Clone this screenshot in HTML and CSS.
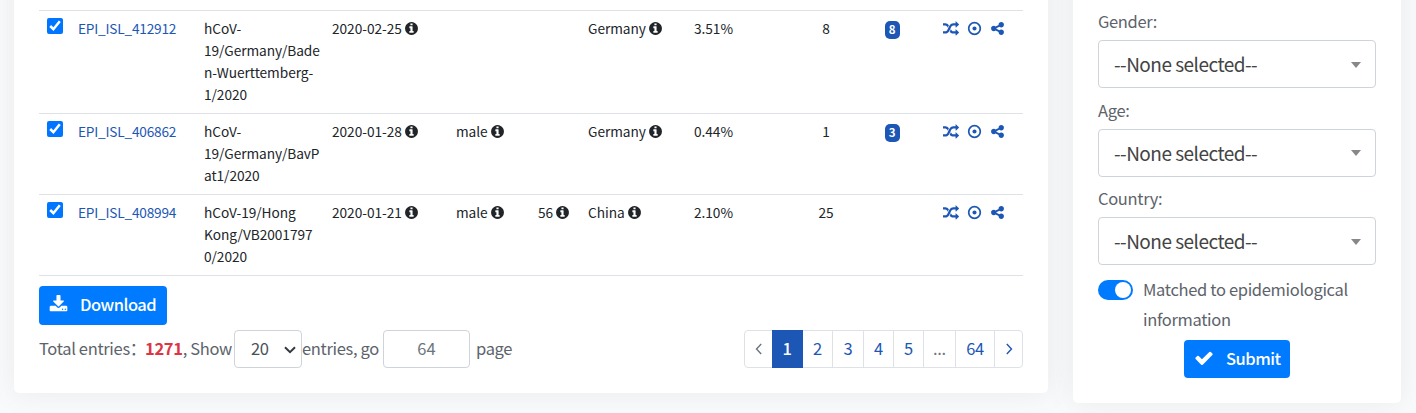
FILE: index.html
```
<!DOCTYPE html>
<html lang="en">
<head>
    <meta charset="UTF-8">
    <meta name="viewport" content="width=device-width, initial-scale=1.0">
    <title>Entries</title>
    <link rel="stylesheet" href="styles.css">
</head>
<body>
    <svg class="sprite" width="0" height="0">
        <symbol id="info" viewBox="0 0 1792 1792"><path d="M1152 1376v-160q0-14-9-23t-23-9h-96v-512q0-14-9-23t-23-9h-320q-14 0-23 9t-9 23v160q0 14 9 23t23 9h96v320h-96q-14 0-23 9t-9 23v160q0 14 9 23t23 9h448q14 0 23-9t9-23zm-128-896v-160q0-14-9-23t-23-9h-192q-14 0-23 9t-9 23v160q0 14 9 23t23 9h192q14 0 23-9t9-23zm640 416q0 209-103 385.5t-279.5 279.5-385.5 103-385.5-103-279.5-279.5-103-385.5 103-385.5 279.5-279.5 385.5-103 385.5 103 279.5 279.5 103 385.5z"/></symbol>
        <symbol id="random" viewBox="0 0 1792 1792"><path d="M666 481q-60 92-137 273-22-45-37-72.5t-40.5-63.5-51-56.5-63-35-81.5-14.5h-224q-14 0-23-9t-9-23v-192q0-14 9-23t23-9h224q250 0 410 225zm1126 799q0 14-9 23l-320 320q-9 9-23 9-13 0-22.5-9.5t-9.5-22.5v-192q-32 0-85 .5t-81 1-73-1-71-5-64-10.5-63-18.5-58-28.5-59-40-55-53.5-56-69.5q59-93 136-273 22 45 37 72.5t40.5 63.5 51 56.5 63 35 81.5 14.5h256v-192q0-14 9-23t23-9q12 0 24 10l319 319q9 9 9 23zm0-896q0 14-9 23l-320 320q-9 9-23 9-13 0-22.5-9.5t-9.5-22.5v-192h-256q-48 0-87 15t-69 45-51 61.5-45 77.5q-32 62-78 171-29 66-49.5 111t-54 105-64 100-74 83-90 68.5-106.5 42-128 16.5h-224q-14 0-23-9t-9-23v-192q0-14 9-23t23-9h224q48 0 87-15t69-45 51-61.5 45-77.5q32-62 78-171 29-66 49.5-111t54-105 64-100 74-83 90-68.5 106.5-42 128-16.5h256v-192q0-14 9-23t23-9q12 0 24 10l319 319q9 9 9 23z"/></symbol>
        <symbol id="dot" viewBox="0 0 14 14"><circle cx="7" cy="7" r="5.4" fill="none" stroke="currentColor" stroke-width="1.6"/><circle cx="7" cy="7" r="1.9"/></symbol>
        <symbol id="share" viewBox="0 0 1792 1792"><path d="M1344 1024q133 0 226.5 93.5t93.5 226.5-93.5 226.5-226.5 93.5-226.5-93.5-93.5-226.5q0-12 2-34l-360-180q-92 86-218 86-133 0-226.5-93.5t-93.5-226.5 93.5-226.5 226.5-93.5q126 0 218 86l360-180q-2-22-2-34 0-133 93.5-226.5t226.5-93.5 226.5 93.5 93.5 226.5-93.5 226.5-226.5 93.5q-126 0-218-86l-360 180q2 22 2 34t-2 34l360 180q92-86 218-86z"/></symbol>
        <symbol id="download" viewBox="0 0 1792 1792"><path d="M1344 1344q0-26-19-45t-45-19-45 19-19 45 19 45 45 19 45-19 19-45zm256 0q0-26-19-45t-45-19-45 19-19 45 19 45 45 19 45-19 19-45zm128-224v320q0 40-28 68t-68 28h-1472q-40 0-68-28t-28-68v-320q0-40 28-68t68-28h465l135 136q58 56 136 56t136-56l136-136h464q40 0 68 28t28 68zm-325-569q17 41-14 70l-448 448q-18 19-45 19t-45-19l-448-448q-31-29-14-70 17-39 59-39h256v-448q0-26 19-45t45-19h256q26 0 45 19t19 45v448h256q42 0 59 39z"/></symbol>
        <symbol id="check" viewBox="0 0 1792 1792"><path d="M1671 566q0 40-28 68l-724 724-136 136q-28 28-68 28t-68-28l-136-136-362-362q-28-28-28-68t28-68l136-136q28-28 68-28t68 28l294 295 656-657q28-28 68-28t68 28l136 136q28 28 28 68z"/></symbol>
    </svg>

    <div class="card entries">
        <table>
            <colgroup>
                <col class="w-check"><col class="w-id"><col class="w-strain"><col class="w-date"><col class="w-gender"><col class="w-age"><col class="w-country"><col class="w-percent"><col class="w-count"><col class="w-count"><col class="w-tools">
            </colgroup>
            <tr>
                <td><input type="checkbox" checked></td>
                <td><a href="#">EPI_ISL_412912</a></td>
                <td>hCoV-<br>19/Germany/Bade<br>n-Wuerttemberg-<br>1/2020</td>
                <td>2020-02-25 <svg class="info"><use href="#info"/></svg></td>
                <td></td>
                <td></td>
                <td>Germany <svg class="info"><use href="#info"/></svg></td>
                <td>3.51%</td>
                <td class="center">8</td>
                <td class="center"><span class="badge">8</span></td>
                <td><div class="tools"><svg class="random"><use href="#random"/></svg><svg><use href="#dot"/></svg><svg><use href="#share"/></svg></div></td>
            </tr>
            <tr>
                <td><input type="checkbox" checked></td>
                <td><a href="#">EPI_ISL_406862</a></td>
                <td>hCoV-<br>19/Germany/BavP<br>at1/2020</td>
                <td>2020-01-28 <svg class="info"><use href="#info"/></svg></td>
                <td>male <svg class="info"><use href="#info"/></svg></td>
                <td></td>
                <td>Germany <svg class="info"><use href="#info"/></svg></td>
                <td>0.44%</td>
                <td class="center">1</td>
                <td class="center"><span class="badge">3</span></td>
                <td><div class="tools"><svg class="random"><use href="#random"/></svg><svg><use href="#dot"/></svg><svg><use href="#share"/></svg></div></td>
            </tr>
            <tr>
                <td><input type="checkbox" checked></td>
                <td><a href="#">EPI_ISL_408994</a></td>
                <td>hCoV-19/Hong<br>Kong/VB2001797<br>0/2020</td>
                <td>2020-01-21 <svg class="info"><use href="#info"/></svg></td>
                <td>male <svg class="info"><use href="#info"/></svg></td>
                <td>56 <svg class="info"><use href="#info"/></svg></td>
                <td>China <svg class="info"><use href="#info"/></svg></td>
                <td>2.10%</td>
                <td class="center">25</td>
                <td></td>
                <td><div class="tools"><svg class="random"><use href="#random"/></svg><svg><use href="#dot"/></svg><svg><use href="#share"/></svg></div></td>
            </tr>
        </table>

        <button class="btn download"><svg><use href="#download"/></svg>Download</button>

        <div class="footer">
            <div class="totals">
                <span class="label-total">Total entries：</span>
                <span class="label-show"><b>1271</b>, Show</span>
                <div class="page-size">20<svg viewBox="0 0 12 8"><path d="M1 1.2l5 5 5-5"/></svg></div>
                <span class="label-go">entries, go</span>
                <input class="page-number" type="text" placeholder="64">
                <span>page</span>
            </div>
            <ul class="pager">
                <li class="muted"><svg viewBox="0 0 8 12"><path d="M6.2 1L1.5 6l4.7 5"/></svg></li>
                <li class="active">1</li>
                <li>2</li>
                <li>3</li>
                <li>4</li>
                <li>5</li>
                <li class="muted">...</li>
                <li>64</li>
                <li><svg viewBox="0 0 8 12"><path d="M1.8 1l4.7 5-4.7 5"/></svg></li>
            </ul>
        </div>
    </div>

    <div class="card filters">
        <label>Gender:</label>
        <div class="select">--None selected--</div>
        <label>Age:</label>
        <div class="select">--None selected--</div>
        <label>Country:</label>
        <div class="select">--None selected--</div>
        <div class="matched">
            <span class="switch"></span>
            <span>Matched to epidemiological information</span>
        </div>
        <button class="btn submit"><svg><use href="#check"/></svg>Submit</button>
    </div>
</body>
</html>
```
FILE: styles.css
```
* {
    box-sizing: border-box;
}
body {
    display: flex;
    align-items: flex-start;
    gap: 25px;
    height: 413px;
    margin: 0;
    padding: 0 15px 0 14px;
    overflow: hidden;
    background-color: #f9fafc;
    color: #5d636b;
    font-family: "Noto Sans CJK SC", "Noto Sans", sans-serif;
    font-size: 16.5px;
    letter-spacing: -0.33px;
}
svg {
    flex: none;
    fill: currentColor;
}
.sprite {
    position: absolute;
}
.card {
    margin-top: -60px;
    padding: 70px 25px 25px;
    background-color: #fff;
    border-radius: 5px;
    box-shadow: 0 0 28px rgba(100, 105, 112, 0.11);
}
.entries {
    width: 1034px;
    height: 453px;
}
.filters {
    width: 328px;
    height: 463px;
    padding-top: 69px;
}

/* entries table */
table {
    width: 984px;
    table-layout: fixed;
    border-collapse: separate;
    border-spacing: 0;
    border-bottom: 1px solid #dee2e6;
    color: #212529;
    font-size: 13.7px;
    line-height: 22px;
    letter-spacing: -0.05px;
}
td {
    padding: 6px 7px 8px;
    border-top: 1px solid #dee2e6;
    vertical-align: top;
    white-space: nowrap;
}
td:first-child {
    padding: 7px 8px;
}
.w-check { width: 32px; }
.w-id { width: 126px; }
.w-strain { width: 128px; }
.w-date { width: 124px; }
.w-gender { width: 82px; }
.w-age { width: 50px; }
.w-country { width: 106px; }
.w-percent { width: 106px; }
.w-count { width: 66px; }
.w-tools { width: 98px; }
td input {
    display: block;
    width: 16px;
    height: 16px;
    margin: 0;
}
td a {
    color: #1c57b5;
    letter-spacing: -0.22px;
    text-decoration: none;
}
.center {
    text-align: center;
}
.info {
    width: 15px;
    height: 15px;
    margin-left: -1px;
    vertical-align: -2px;
}
.badge {
    display: inline-block;
    width: 15px;
    height: 18px;
    margin-top: 4px;
    border-radius: 5px;
    background-color: #1c57b5;
    color: #fff;
    font-size: 11.5px;
    font-weight: bold;
    line-height: 17px;
    vertical-align: top;
}
.tools {
    display: flex;
    align-items: center;
    gap: 8px;
    height: 22px;
    padding: 1px 0 0 11px;
    color: #1c57b5;
}
.tools svg {
    width: 15px;
    height: 15px;
}
.tools .random {
    width: 16px;
    height: 16px;
}

/* buttons */
.btn {
    display: flex;
    align-items: center;
    height: 38px;
    padding: 0 0 2px 10px;
    border: 0;
    border-radius: 4px;
    background-color: #007bff;
    color: #fff;
    font-family: inherit;
    font-size: 16.5px;
    font-weight: 500;
    letter-spacing: -0.5px;
}
.btn svg {
    width: 19px;
    height: 19px;
    margin: 1px 12px 0 0;
}
.download {
    width: 128px;
    height: 39px;
    margin-top: 10px;
    padding-bottom: 3px;
}
.submit {
    width: 106px;
    margin: 6px auto 0;
}
.submit svg {
    width: 20px;
    height: 20px;
}

/* totals and pager */
.footer {
    display: flex;
    justify-content: space-between;
    margin-top: 5px;
}
.totals {
    display: flex;
    align-items: center;
    height: 38px;
    white-space: nowrap;
}
.totals span {
    padding-bottom: 2px;
}
.label-total {
    width: 106px;
}
.label-show {
    width: 89px;
}
.label-show b {
    color: #dc3545;
}
.page-size {
    display: flex;
    align-items: center;
    justify-content: space-between;
    width: 68px;
    height: 38px;
    padding: 0 5px 2px 16px;
    border: 1px solid #ced4da;
    border-radius: 4px;
    color: #495057;
}
.page-size svg {
    width: 12px;
    height: 8px;
    margin-top: 3px;
    fill: none;
    stroke: #343a40;
    stroke-width: 2;
}
.label-go {
    width: 81px;
}
.page-number {
    width: 87px;
    height: 38px;
    margin-right: 6px;
    padding: 0 0 2px;
    border: 1px solid #ced4da;
    border-radius: 4px;
    font-family: inherit;
    font-size: 16.5px;
    text-align: center;
}
.page-number::placeholder {
    color: #6c757d;
}
.pager {
    display: grid;
    grid-template-columns: 27px 31px 30px 31px 30px 30px 32px 39px 27px;
    width: 279px;
    height: 38px;
    margin: 0;
    padding: 0;
    border: 1px solid #dee2e6;
    border-radius: 4px;
    list-style: none;
    color: #1c57b5;
}
.pager li {
    display: flex;
    align-items: center;
    justify-content: center;
    padding-bottom: 2px;
    border-right: 1px solid #dee2e6;
}
.pager li:first-child,
.pager li:last-child {
    padding-bottom: 0;
    border-right: 0;
}
.pager .active {
    margin: -1px 0;
    border-color: #1c57b5;
    background-color: #1c57b5;
    color: #fff;
    font-weight: 500;
}
.pager .muted {
    color: #6c757d;
}
.pager svg {
    width: 8px;
    height: 12px;
    fill: none;
    stroke: currentColor;
    stroke-width: 1.4;
}

/* filters */
.filters label {
    display: block;
    height: 24px;
    line-height: 24px;
}
.select {
    display: flex;
    align-items: center;
    justify-content: space-between;
    height: 48px;
    margin: 7px 0 9.5px;
    padding: 0 14px 1px 15px;
    border: 1px solid #ced4da;
    border-radius: 4px;
    color: #444;
    font-size: 19px;
    letter-spacing: -0.52px;
}
.select::after {
    content: "";
    margin-top: 2px;
    border: 5px solid transparent;
    border-top: 6px solid #888;
    border-bottom: 0;
}
.matched {
    display: flex;
    gap: 10px;
    margin-top: -1px;
    padding-top: 8.5px;
    line-height: 30px;
}
.select + .matched {
    margin-top: -9.5px;
}
.switch {
    flex: none;
    width: 35px;
    height: 20px;
    margin-top: 6px;
    padding: 2px;
    border-radius: 10px;
    background-color: #007bff;
}
.switch::after {
    content: "";
    display: block;
    width: 16px;
    height: 16px;
    margin-left: auto;
    border-radius: 50%;
    background-color: #fff;
}
```
